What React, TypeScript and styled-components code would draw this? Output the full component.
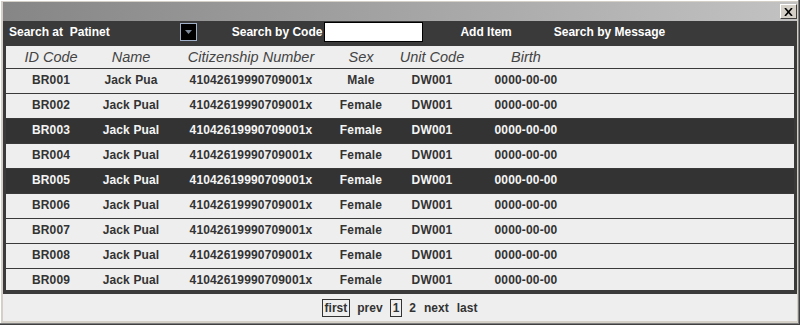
import styled, { createGlobalStyle } from "styled-components";

const GlobalStyle = createGlobalStyle`
	html, body {
		margin: 0;
		padding: 0;
		background: #ffffff;
	}
	* {
		box-sizing: border-box;
	}
`;

const columns = "90px 70px 170px 50px 92px 96px";

const Window = styled.div`
	width: 800px;
	height: 325px;
	background: #d4d0c8;
	padding: 2px 3px 4px 3px;
	display: flex;
	flex-direction: column;
	font-family: "Liberation Sans", Arial, sans-serif;
	box-shadow: inset -1px -1px 0 #404040, inset -2px -2px 0 #808080, inset 1px 1px 0 #ffffff;
`;

const TitleBar = styled.div`
	height: 19px;
	flex-shrink: 0;
	background: linear-gradient(to right, #868686, #c2c2c2);
	display: flex;
	align-items: center;
	justify-content: flex-end;
`;

const CloseButton = styled.div`
	width: 17px;
	height: 15px;
	background: #d4d0c8;
	border: 1px solid;
	border-color: #ffffff #404040 #404040 #ffffff;
	display: flex;
	align-items: center;
	justify-content: center;
`;

const Toolbar = styled.div`
	height: 21px;
	flex-shrink: 0;
	background: #3a3a3a;
	display: flex;
	align-items: center;
	color: #ffffff;
	font-size: 12px;
	font-weight: bold;
`;

const ToolLabel = styled.span<{ $ml: number }>`
	margin-left: ${(p) => p.$ml}px;
	white-space: pre;
	cursor: pointer;
`;

const DropButton = styled.div<{ $ml: number }>`
	margin-left: ${(p) => p.$ml}px;
	width: 17px;
	height: 18px;
	background: #000000;
	border: 1px solid #9fb0c8;
	display: flex;
	align-items: center;
	justify-content: center;
`;

const CodeInput = styled.input<{ $ml: number }>`
	margin-left: ${(p) => p.$ml}px;
	width: 99px;
	height: 20px;
	border: 1px solid #000000;
	background: #ffffff;
	outline: none;
	padding: 0 3px;
`;

const Frame = styled.div`
	background: #3a3a3a;
	padding: 4px 3px;
	flex-shrink: 0;
`;

const TableArea = styled.div`
	height: 244px;
	overflow: hidden;
	background: #eeeeee;
`;

const HeaderRow = styled.div`
	display: grid;
	grid-template-columns: ${columns};
	height: 23px;
	border-bottom: 1px solid #3a3a3a;
	align-items: center;
	font-size: 14.5px;
	font-style: italic;
	color: #444444;
`;

const Row = styled.div<{ $dark?: boolean }>`
	display: grid;
	grid-template-columns: ${columns};
	height: 25px;
	border-bottom: 1px solid #3a3a3a;
	align-items: center;
	padding-bottom: 3px;
	font-size: 12px;
	font-weight: bold;
	letter-spacing: 0.15px;
	background: ${(p) => (p.$dark ? "#333333" : "#eeeeee")};
	color: ${(p) => (p.$dark ? "#f4f4f4" : "#333333")};
`;

const Cell = styled.div`
	text-align: center;
	white-space: nowrap;
`;

const Pager = styled.div`
	flex: 1;
	background: #eeeeee;
	display: flex;
	align-items: center;
	justify-content: center;
	gap: 6px;
	font-size: 12px;
	font-weight: bold;
	color: #333333;
`;

const PageLink = styled.span<{ $boxed?: boolean }>`
	padding: ${(p) => (p.$boxed ? "1px 2px" : "2px 0")};
	border: ${(p) => (p.$boxed ? "1px solid #333333" : "none")};
	margin: ${(p) => (p.$boxed ? "0" : "0 1px")};
	cursor: pointer;
`;

const records = Array.from({ length: 9 }, (_, i) => ({
	id: `BR00${i + 1}`,
	name: i === 0 ? "Jack Pua" : "Jack Pual",
	citizen: "41042619990709001x",
	sex: i === 0 ? "Male" : "Female",
	unit: "DW001",
	birth: "0000-00-00",
	dark: i === 2 || i === 4,
}));

export default function App() {
	return (
		<>
			<GlobalStyle />
			<Window>
				<TitleBar>
					<CloseButton>
						<svg width="9" height="8" viewBox="0 0 9 8">
							<path d="M1 0 L8 8 M8 0 L1 8" stroke="#000" strokeWidth="1.6" />
						</svg>
					</CloseButton>
				</TitleBar>
				<Toolbar>
					<ToolLabel $ml={6}>Search at  Patinet</ToolLabel>
					<DropButton $ml={70}>
						<svg width="7" height="4" viewBox="0 0 7 4">
							<path d="M0 0 L7 0 L3.5 4 Z" fill="#7d8a99" />
						</svg>
					</DropButton>
					<ToolLabel $ml={35}>Search by Code</ToolLabel>
					<CodeInput $ml={2} />
					<ToolLabel $ml={37}>Add Item</ToolLabel>
					<ToolLabel $ml={42}>Search by Message</ToolLabel>
				</Toolbar>
				<Frame>
					<TableArea>
						<HeaderRow>
							<Cell>ID Code</Cell>
							<Cell>Name</Cell>
							<Cell>Citizenship Number</Cell>
							<Cell>Sex</Cell>
							<Cell>Unit Code</Cell>
							<Cell>Birth</Cell>
						</HeaderRow>
						{records.map((r) => (
							<Row key={r.id} $dark={r.dark}>
								<Cell>{r.id}</Cell>
								<Cell>{r.name}</Cell>
								<Cell>{r.citizen}</Cell>
								<Cell>{r.sex}</Cell>
								<Cell>{r.unit}</Cell>
								<Cell>{r.birth}</Cell>
							</Row>
						))}
					</TableArea>
				</Frame>
				<Pager>
					<PageLink $boxed>first</PageLink>
					<PageLink>prev</PageLink>
					<PageLink $boxed>1</PageLink>
					<PageLink>2</PageLink>
					<PageLink>next</PageLink>
					<PageLink>last</PageLink>
				</Pager>
			</Window>
		</>
	);
}
